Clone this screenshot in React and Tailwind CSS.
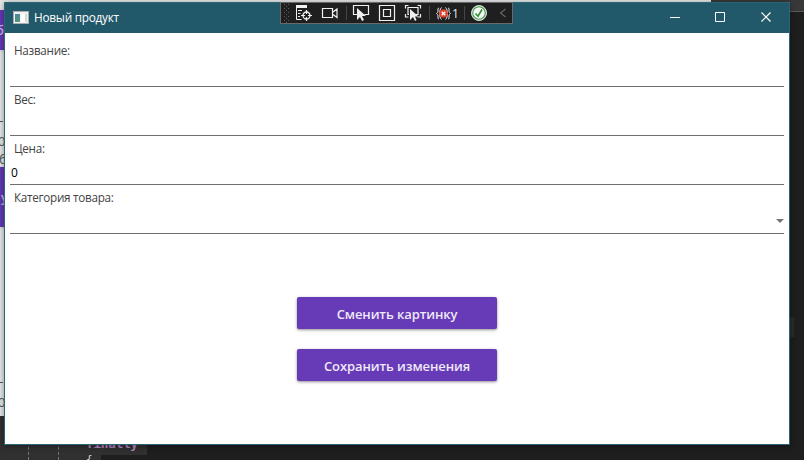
const UI = "font-['Open_Sans','Noto_Sans',sans-serif]";

function PageBehind() {
  return (
    <div className={`flex h-[416px] w-[711px] shrink-0 flex-col overflow-hidden bg-[#e3e5e6] pt-[10px] text-[13px] leading-4 text-[#555] ${UI}`}>
      <div className="flex h-10 w-5 items-center bg-[#6237b2] font-semibold text-[#c9bde3] shadow">
        <span className="-ml-1">б</span>
      </div>
      <div className="mt-[71px] flex h-[46px] flex-col">
        <span className="h-px w-[3px] shrink-0 bg-[#555]" />
        <span className="-ml-0.5 mt-[11px]">0</span>
        <span className="-ml-px mt-0.5">б</span>
      </div>
      <div className="flex h-[60px] w-5 items-center bg-[#6237b2] pl-px font-semibold text-[#c9bde3] shadow">у</div>
      <div className="mt-[155px] flex flex-col">
        <span className="h-px w-[3px] shrink-0 bg-[#555]" />
        <span className="-ml-0.5 mt-[11px]">0</span>
      </div>
    </div>
  );
}

function Backdrop() {
  return (
    <div className="flex h-full flex-col bg-[#1e1e1e]">
      <div className="flex h-[416px] shrink-0">
        <PageBehind />
        <div className="flex flex-1 flex-col">
          <div className="h-3 border-b border-[#5a5a5a] bg-[#383838]" />
          <div className="mt-[305px] h-5 w-[83px] bg-[#2b2b2b]" />
        </div>
      </div>
      <div className="flex flex-1 bg-linear-to-r from-[#303030] from-[147px] to-[#1e1e1e] to-[147px]">
        <div className="ml-[28px] w-[30px] border-l border-dashed border-[#777]" />
        <div className="w-[28px] border-l border-dashed border-[#777]" />
        <div className="flex w-[61px] flex-col pt-[20px] font-['DejaVu_Sans_Mono',monospace] text-[12.5px] font-bold leading-[16px] tracking-[-0.1px] text-[#b884c4]">
          <div className="h-[19px]">finally</div>
          <div className="ml-[15px] -mb-1 h-[5px] bg-[#1e1e1e]">
            <span className="-ml-[15px] block h-[5px] text-[11px] font-normal leading-[10px] text-[#cfd2d6]">{'{'}</span>
          </div>
        </div>
      </div>
    </div>
  );
}

function AppIcon() {
  return (
    <svg className="-mt-[2px] h-[13px] w-[16px]" viewBox="0 0 16 13" shapeRendering="crispEdges">
      <defs>
        <linearGradient id="scene" x1="0" y1="0" x2="1" y2="1">
          <stop offset="0" stopColor="#4b7fa8" />
          <stop offset="1" stopColor="#4fa06a" />
        </linearGradient>
      </defs>
      <rect width="16" height="13" fill="#a9adb0" />
      <rect x="1" y="1" width="14" height="11" fill="#f1f1f1" />
      <rect x="2" y="3" width="5" height="8" fill="url(#scene)" />
      <rect x="8" y="3" width="4" height="8" fill="#ffffff" />
      <rect x="12" y="3" width="2" height="8" fill="#cfdcd6" />
    </svg>
  );
}

function Separator() {
  return <path d="M0.5 4v14" stroke="#464646" />;
}

function DebugToolbar() {
  return (
    <div className="absolute left-[280px] top-[2px] h-[22px] w-[233px] border border-[#6a6a6a] bg-[#1f1f1f]">
      <svg className="block h-5 w-[231px]" viewBox="281 3 231 20" fill="none" stroke="#f0f0f0">
        <g fill="#5c5c5c" stroke="none" shapeRendering="crispEdges">
          {[4, 8, 12, 16, 20].map((y) => (
            <g key={y}>
              <rect x="284" y={y} width="1" height="1" />
              <rect x="288" y={y} width="1" height="1" />
              <rect x="286" y={y + 2} width="1" height="1" />
            </g>
          ))}
        </g>
        <path d="M296 5h11v3h-11z" fill="#f0f0f0" stroke="none" />
        <path d="M296.5 8v11.5h5M298 10.5h4M298 13.5h2.500M298 16.500h2" />
        <circle cx="306.500" cy="15.500" r="3.500" strokeWidth="1.300" />
        <path d="M306.500 10v4M306.500 17v4M301 15.500h4M308 15.500h4" strokeWidth="1.200" />
        <path d="M322.500 8.500h10v9h-10zM333 12l4-3v8.500l-4-3" strokeWidth="1.200" />
        <g transform="translate(346 2)"><Separator /></g>
        <path d="M357 14.500h-3.500v-9h15v9h-4" strokeWidth="1.200" />
        <path d="M357 8v12l3-3 2 4 2-1-2-4h4z" fill="#f0f0f0" stroke="none" />
        <path d="M379.500 5.500h15v15h-15zM383.500 9.500h7v7h-7z" strokeWidth="1.200" />
        <path d="M405.500 8.500v-3h3M417.500 5.500h3v3M405.500 14v3h3M420.500 14v3h-3M409 14.500h-1v-7h10v7h-3" strokeWidth="1.200" />
        <path d="M410 9v11l3-3 2 4 1.500-1-1.500-3.500h3.500z" fill="#f0f0f0" stroke="none" />
        <g transform="translate(429 2)"><Separator /></g>
        <path d="M439 8c-1.500 0-1 2-1 3 0 1-.5 2-1.500 2.500 1 .5 1.500 1.500 1.500 2.500 0 1-.5 3 1 3M448 8c1.500 0 1 2 1 3 0 1 .5 2 1.500 2.500-1 .5-1.500 1.500-1.500 2.500 0 1 .5 3-1 3M441.500 7.500c-2.500 2-2.500 10 0 12M445.500 7.500c2.500 2 2.500 10 0 12" />
        <circle cx="443.500" cy="13.500" r="4.300" fill="#e53a24" stroke="none" />
        <path d="m441.700 11.700 3.600 3.600m0-3.600-3.600 3.600" stroke="#fff" strokeWidth="1.400" />
        <text x="452" y="18" fill="#e8e8e8" stroke="none" fontFamily="Open Sans" fontSize="12">1</text>
        <g transform="translate(464 2)"><Separator /></g>
        <circle cx="479" cy="13" r="7.500" fill="#f4f7f4" stroke="#d7ddd7" />
        <circle cx="479" cy="13" r="6.300" stroke="#389a40" strokeWidth="1.100" />
        <path d="m475.500 13.500 2.500 2.700 4-6.700" stroke="#2f9138" strokeWidth="1.600" />
        <path d="m505.500 9-5 4 5 4" stroke="#666" strokeWidth="1.200" />
      </svg>
    </div>
  );
}

function TitleBar() {
  return (
    <header className="flex h-[30px] shrink-0 items-center bg-[#22596a] pl-2 pr-[16px] text-white">
      <AppIcon />
      <h1 className="-mt-0.5 ml-[5px] flex-1 text-[11.8px] leading-4 tracking-[-0.25px]">Новый продукт</h1>
      <svg className="-mt-px h-[11px] w-[103px]" viewBox="0 0 103 11" fill="none" stroke="white">
        <path d="M0 5.500h10M45.500.5h9v9h-9z" />
        <path d="m91.500.5 9 9m0-9-9 9" strokeWidth="1.200" />
      </svg>
    </header>
  );
}

function Field({ label, value, select }) {
  return (
    <div className="flex h-[49px] flex-col border-b border-[#6f6f6f]">
      <label className="pb-px pl-1 pt-1 text-[11.7px] leading-4 tracking-[-0.28px] text-[#444]">{label}</label>
      <div className="flex flex-1 items-center justify-between pl-px pt-1 text-[12px] leading-4 text-black">
        <span>{value}</span>
        {select && (
          <svg className="mb-0.5 h-1 w-2" viewBox="0 0 8 4">
            <path d="M0 0h8L4 4z" fill="#757575" />
          </svg>
        )}
      </div>
    </div>
  );
}

function Button({ children }) {
  return (
    <button className="h-8 w-[200px] rounded-[2px] bg-[#673ab7] pt-px text-[13px] font-[650] leading-4 tracking-[-0.1px] text-[#efe9f8] shadow-[0_1px_3px_rgba(0,0,0,0.45)]">
      {children}
    </button>
  );
}

export default function App() {
  return (
    <div className={`relative h-[460px] w-[804px] overflow-hidden ${UI}`}>
      <Backdrop />
      <div className="absolute left-[4px] top-[2px] flex h-[443px] w-[786px] flex-col border border-[#2b6677] bg-white shadow-[0_1px_6px_rgba(0,0,0,0.4)]">
        <TitleBar />
        <main className="flex flex-1 flex-col px-[5px] pt-[5px]">
          <Field label="Название:" />
          <Field label="Вес:" />
          <Field label="Цена:" value="0" />
          <Field label="Категория товара:" select />
          <div className="flex flex-col items-center gap-5 pt-[63px]">
            <Button>Сменить картинку</Button>
            <Button>Сохранить изменения</Button>
          </div>
        </main>
      </div>
      <DebugToolbar />
    </div>
  );
}
